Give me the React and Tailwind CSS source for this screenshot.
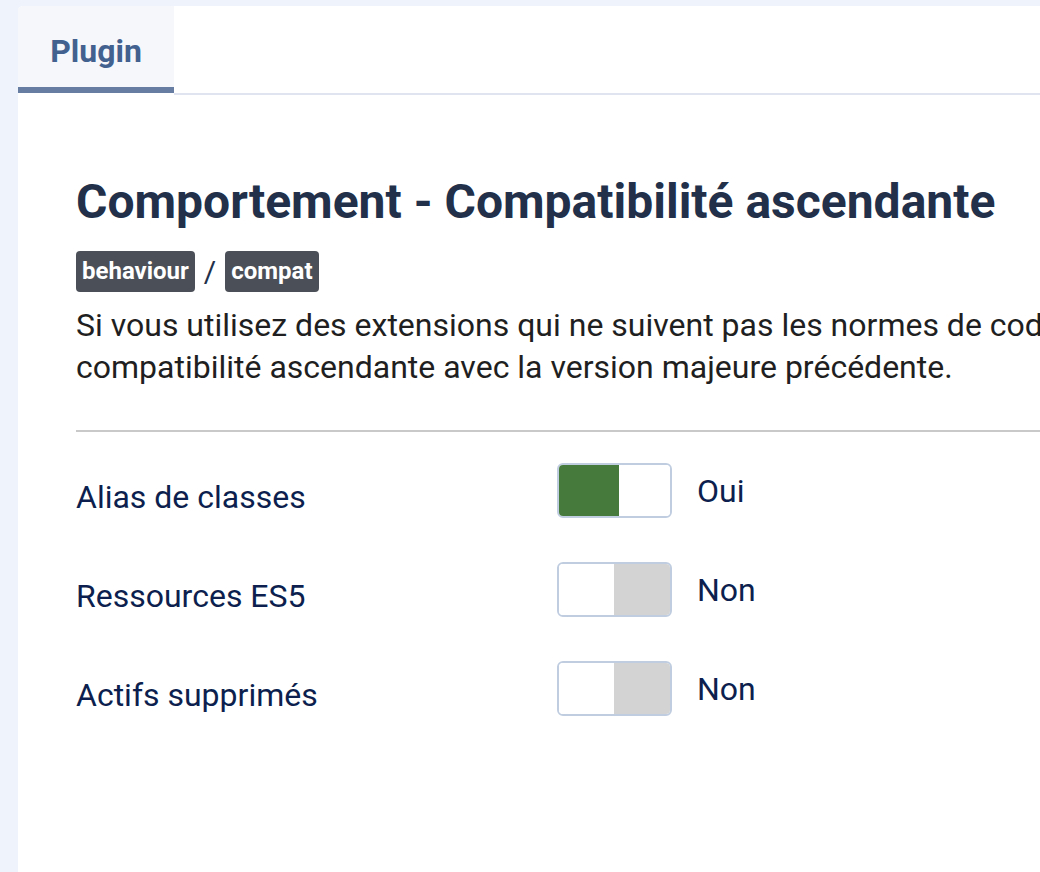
import React from 'react'

const ROWS = [
  { label: 'Alias de classes', on: true },
  { label: 'Ressources ES5', on: false },
  { label: 'Actifs supprimés', on: false },
]

function Toggle({ on }) {
  return (
    <div className="flex h-[55px] w-[115px] shrink-0 overflow-hidden rounded-[6px] border-2 border-[#c0cde0] bg-white">
      {on ? (
        <>
          <span className="w-[60px] bg-[#467a3c]" />
          <span className="flex-1 bg-white" />
        </>
      ) : (
        <>
          <span className="w-[55px] bg-white" />
          <span className="flex-1 bg-[#d3d3d3]" />
        </>
      )}
    </div>
  )
}

export default function App() {
  return (
    <div className="min-h-[872px] bg-[#eff3fb] pl-[18px] pt-[6px]" style={{ fontFamily: 'Roboto, "Noto Sans", sans-serif' }}>
      <div className="min-h-[866px] overflow-hidden rounded-tl-[5px] bg-white">
        {/* Tabs */}
        <div className="flex items-start">
          <div className="flex h-[87px] w-[156px] items-center justify-center border-b-[6px] border-[#677da1] bg-[#f5f7fb] pt-[9px] text-[32px] font-bold leading-[38px] text-[#43618f]">
            Plugin
          </div>
          <div className="h-[89px] flex-1 border-b-2 border-[#dfe4f0]" />
        </div>

        {/* Content */}
        <div className="pl-[58px] pt-[79px]">
          <h2 className="whitespace-nowrap text-[48px] font-bold leading-[56px] text-[#22304a]">
            Comportement - Compatibilité ascendante
          </h2>
          <div className="mt-[21px] flex items-center gap-[9px] text-[30px] leading-[41px] text-[#22304a]">
            <span className="rounded-[4px] bg-[#4b5058] px-[6px] py-[4px] text-[24px] font-bold leading-[33px] text-white">behaviour</span>
            <span>/</span>
            <span className="rounded-[4px] bg-[#4b5058] px-[6px] py-[4px] text-[24px] font-bold leading-[33px] text-white">compat</span>
          </div>
          <p className="mt-[12px] overflow-hidden whitespace-nowrap text-[32px] leading-[42px] text-[#1f1f22]">
            Si vous utilisez des extensions qui ne suivent pas les normes de codage de Joomla, activez ce plugin pour assurer la
            <br />
            compatibilité ascendante avec la version majeure précédente.
          </p>
          <hr className="mt-[42px] border-t-2 border-[#c9c9c9]" />

          <div className="mt-[31px] flex flex-col gap-[44px]">
            {ROWS.map(r => (
              <div key={r.label} className="flex items-center">
                <span className="w-[481px] pt-[13px] text-[32px] leading-[38px] text-[#0c1f4e]">{r.label}</span>
                <Toggle on={r.on} />
                <span className="ml-[25px] text-[32px] leading-[38px] text-[#0c1f4e]">{r.on ? 'Oui' : 'Non'}</span>
              </div>
            ))}
          </div>
        </div>
      </div>
    </div>
  )
}
